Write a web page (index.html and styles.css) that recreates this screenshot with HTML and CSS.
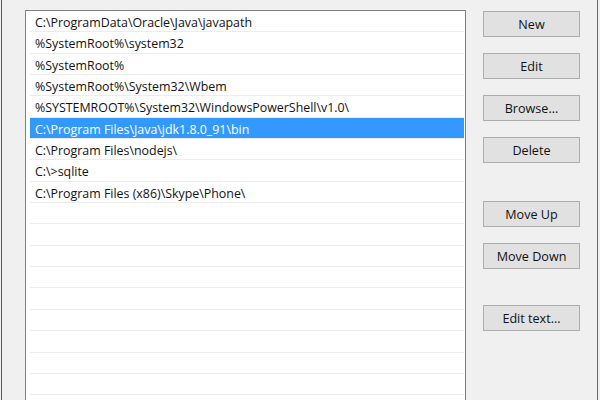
FILE: index.html
```html
<!DOCTYPE html>
<html>
<head>
<meta charset="utf-8">
<link rel="stylesheet" href="styles.css">
</head>
<body>
<div class="window">
  <div class="list">
    <div class="row">C:\ProgramData\Oracle\Java\javapath</div>
    <div class="row">%SystemRoot%\system32</div>
    <div class="row">%SystemRoot%</div>
    <div class="row">%SystemRoot%\System32\Wbem</div>
    <div class="row">%SYSTEMROOT%\System32\WindowsPowerShell\v1.0\</div>
    <div class="row selected">C:\Program Files\Java\jdk1.8.0_91\bin</div>
    <div class="row">C:\Program Files\nodejs\</div>
    <div class="row">C:\&gt;sqlite</div>
    <div class="row">C:\Program Files (x86)\Skype\Phone\</div>
    <div class="row"></div>
    <div class="row"></div>
    <div class="row"></div>
    <div class="row"></div>
    <div class="row"></div>
    <div class="row"></div>
    <div class="row"></div>
    <div class="row"></div>
    <div class="row"></div>
  </div>
  <div class="buttons">
    <button class="btn">New</button>
    <button class="btn">Edit</button>
    <button class="btn">Browse...</button>
    <button class="btn">Delete</button>
    <button class="btn gap-big">Move Up</button>
    <button class="btn">Move Down</button>
    <button class="btn gap-mid">Edit text...</button>
  </div>
</div>
</body>
</html>
```
FILE: styles.css
```css
html, body {
  margin: 0;
  padding: 0;
  background: #f0f0f0;
  overflow: hidden;
}
.window {
  box-sizing: border-box;
  width: 597px;
  height: 400px;
  margin-left: 1px;
  border-left: 1px solid #5a5a5a;
  border-right: 1px solid #6a6a6a;
  background: #f0f0f0;
  display: flex;
  align-items: flex-start;
  padding: 10px 0 0 23px;
  font-family: "Open Sans", "Noto Sans", sans-serif;
  font-size: 12.4px;
  color: #111;
  overflow: hidden;
}
.list {
  box-sizing: border-box;
  width: 441px;
  height: 420px;
  border: 1px solid #7f7f7f;
  border-bottom: none;
  background: #fff;
  padding: 0 1px 0 4px;
  flex-shrink: 0;
}
.row {
  box-sizing: border-box;
  height: 21.35px;
  border-bottom: 1px solid #ececec;
  padding: 2px 0 0 5px;
  line-height: 19px;
  white-space: nowrap;
}
.row.selected {
  background: #3399ff;
  color: #fff;
}
.buttons {
  display: flex;
  flex-direction: column;
  gap: 16px;
  margin-left: 17px;
  padding-top: 1px;
}
.btn {
  box-sizing: border-box;
  width: 97px;
  height: 26px;
  margin: 0;
  padding: 1px 0 0;
  background: #e1e1e1;
  border: 1px solid #adadad;
  font-family: "Open Sans", "Noto Sans", sans-serif;
  font-size: 12.6px;
  color: #111;
}
.gap-big {
  margin-top: 22px;
}
.gap-mid {
  margin-top: 20px;
}
```
